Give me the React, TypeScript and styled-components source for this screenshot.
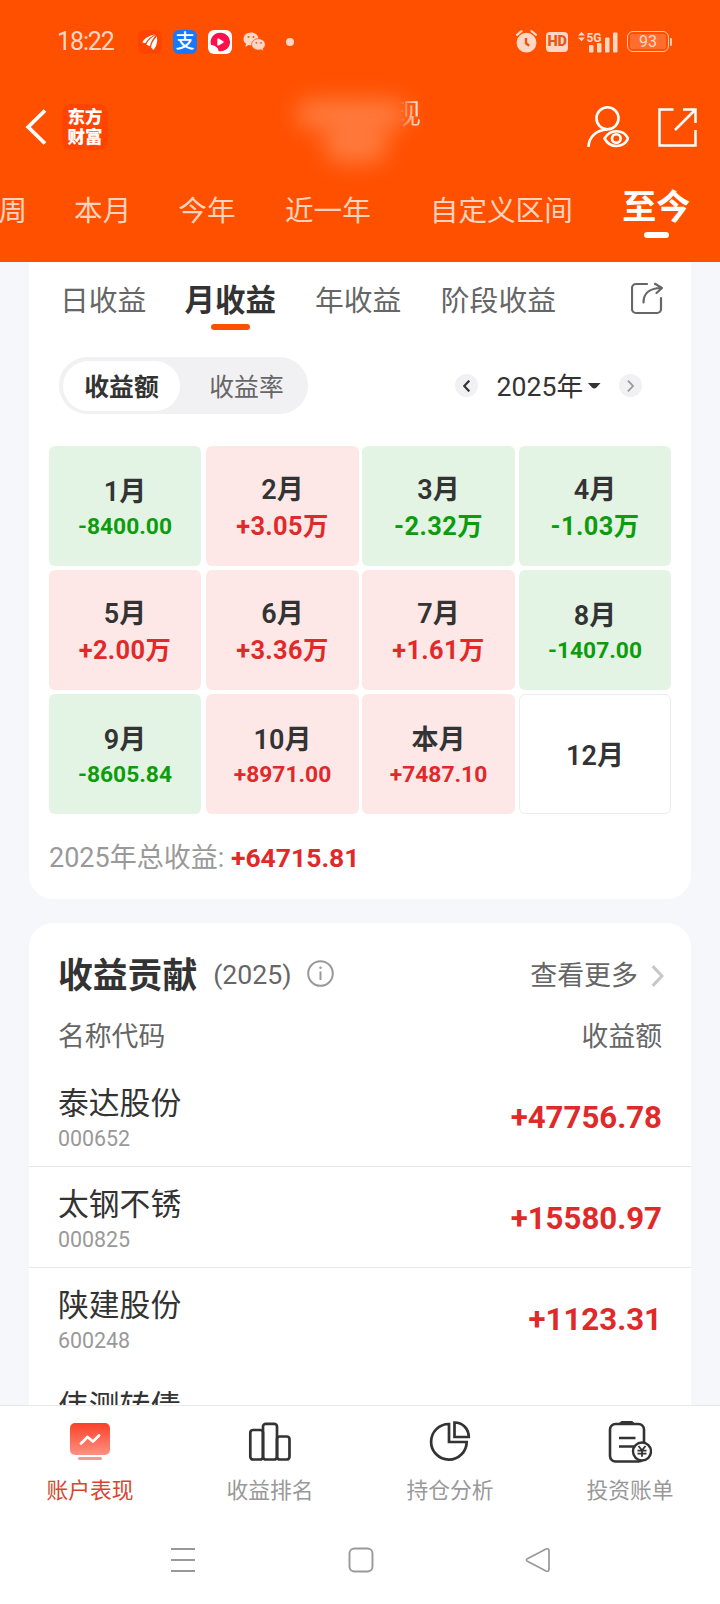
import React from 'react';
import styled, { createGlobalStyle } from 'styled-components';

const GlobalStyle = createGlobalStyle`
  * { box-sizing: border-box; }
  body {
    margin: 0;
    background: #fff;
    font-family: Roboto, 'Noto Sans CJK SC', sans-serif;
    color: #333;
  }
  svg { display: block; flex: none; }
`;

const Screen = styled.div`
  width: 720px;
  height: 1604px;
  display: flex;
  flex-direction: column;
  overflow: hidden;
  background: #f6f7fa;
`;

/* ---------- header ---------- */

const Header = styled.header`
  height: 262px;
  flex: none;
  background: #ff5000;
  color: #fff;
  overflow: hidden;
`;

const StatusBar = styled.div`
  height: 82px;
  padding: 1px 48px 0 57px;
  display: flex;
  justify-content: space-between;
  align-items: center;
`;

const StatusGroup = styled.div<{ $gap: number }>`
  display: flex;
  align-items: center;
  gap: ${(p) => p.$gap}px;
`;

const Clock = styled.span`
  width: 70px;
  font-size: 25px;
  line-height: 30px;
  letter-spacing: -1.1px;
  color: #ffd7c4;
  white-space: nowrap;
`;

const AppBadge = styled.span<{ $bg: string }>`
  width: 24px;
  height: 24px;
  border-radius: 6px;
  background: ${(p) => p.$bg};
  display: flex;
  align-items: center;
  justify-content: center;
  font-size: 19px;
  line-height: 24px;
  font-weight: 500;
`;

const DotSlot = styled.span`
  margin-left: 9px;
`;

const HdBadge = styled.span`
  width: 22px;
  height: 20px;
  border-radius: 4px;
  background: #ffd7c4;
  color: #e8561a;
  font-size: 14.5px;
  line-height: 20px;
  font-weight: 900;
  letter-spacing: -0.4px;
  text-align: center;
`;

const BatteryShell = styled.span`
  width: 42px;
  height: 21px;
  border: 1.8px solid #ffc8ac;
  border-radius: 6px;
  padding: 2px;
  display: flex;
`;

const BatteryFill = styled.span`
  flex: 1;
  border-radius: 2px;
  background: #ff6e2e;
  color: #ffd7c4;
  font-size: 16px;
  line-height: 16px;
  text-align: center;
`;

const Battery = styled.span`
  display: flex;
  align-items: center;
  &::after {
    content: '';
    width: 2px;
    height: 8px;
    margin-left: 1px;
    border-radius: 1px;
    background: #ffc8ac;
  }
`;

const TitleBar = styled.div`
  height: 90px;
  padding: 0 23px 0 25px;
  display: flex;
  align-items: center;
`;

const BrandBadge = styled.div`
  width: 46px;
  height: 46px;
  margin-left: 15px;
  border-radius: 9px;
  background: #ff4400;
  display: flex;
  align-items: center;
  justify-content: center;
  font-size: 17.5px;
  line-height: 20px;
  font-weight: 900;
  text-align: center;
`;

const TitleArea = styled.div`
  position: relative;
  width: 150px;
  height: 80px;
  margin-left: 180px;
`;

const Smudge = styled.span<{ $x: number; $y: number; $w: number; $h: number }>`
  position: absolute;
  left: ${(p) => p.$x}px;
  top: ${(p) => p.$y}px;
  width: ${(p) => p.$w}px;
  height: ${(p) => p.$h}px;
  border-radius: 18px;
  background: rgba(255, 150, 100, 0.6);
  filter: blur(11px);
`;

const TitleTail = styled.span`
  position: absolute;
  left: 105px;
  top: 11px;
  font-size: 28px;
  line-height: 34px;
  color: #ffd9c8;
  mask-image: linear-gradient(90deg, transparent 25%, #000 80%);
`;

const HeaderActions = styled.div`
  display: flex;
  align-items: center;
  gap: 29px;
  margin-left: auto;
`;

const RangeTabs = styled.nav`
  display: flex;
  height: 90px;
  margin-left: -1.5px;
  white-space: nowrap;
`;

const RangeTab = styled.span<{ $lead: number }>`
  margin-left: ${(p) => p.$lead}px;
  padding-top: 19px;
  font-size: 28.6px;
  line-height: 40px;
  color: #ffd3bd;
`;

const RangeTabActive = styled(RangeTab)`
  display: flex;
  flex-direction: column;
  align-items: center;
  padding-top: 14px;
  font-size: 34px;
  line-height: 42px;
  font-weight: 700;
  color: #fff;
  &::after {
    content: '';
    width: 25px;
    height: 6px;
    margin-top: 4px;
    border-radius: 3px;
    background: #fff;
  }
`;

/* ---------- content ---------- */

const Content = styled.main`
  height: 1143px;
  flex: none;
  padding: 0 29px;
  overflow: hidden;
`;

const CalendarCard = styled.section`
  height: 637px;
  padding: 0 20px;
  background: #fff;
  border-radius: 0 0 24px 24px;
`;

const PeriodTabs = styled.nav`
  height: 80px;
  padding: 0 8px 0 11px;
  display: flex;
  white-space: nowrap;
`;

const PeriodTab = styled.span<{ $lead?: number }>`
  margin-left: ${(p) => p.$lead ?? 0}px;
  padding-top: 19px;
  font-size: 28.8px;
  line-height: 40px;
  color: #666;
`;

const PeriodTabActive = styled(PeriodTab)`
  display: flex;
  flex-direction: column;
  align-items: center;
  font-size: 30.5px;
  font-weight: 700;
  color: #333;
  &::after {
    content: '';
    width: 39px;
    height: 6px;
    margin-top: 3px;
    border-radius: 3px;
    background: #ff5000;
  }
`;

const ShareButton = styled.span`
  margin: 20px 0 0 auto;
`;

const Controls = styled.div`
  height: 57px;
  margin: 15px 29px 0 10px;
  display: flex;
  align-items: center;
  justify-content: space-between;
`;

const Segmented = styled.div`
  width: 249px;
  height: 57px;
  padding: 4px;
  display: flex;
  border-radius: 29px;
  background: #f1f1f4;
`;

const Segment = styled.span<{ $active?: boolean }>`
  width: ${(p) => (p.$active ? 117 : 124)}px;
  padding-left: ${(p) => (p.$active ? 0 : 9)}px;
  height: 50px;
  border-radius: 25px;
  font-size: 24.8px;
  line-height: 53px;
  text-align: center;
  ${(p) =>
    p.$active
      ? 'background: #fff; color: #333; font-weight: 700;'
      : 'color: #666;'}
`;

const YearPicker = styled.div`
  display: flex;
  align-items: center;
`;

const RoundButton = styled.span`
  width: 23px;
  height: 23px;
  border-radius: 50%;
  background: #f1f1f3;
  display: flex;
  align-items: center;
  justify-content: center;
`;

const YearText = styled.span`
  margin: 2px 5px 0 19px;
  font-size: 26.6px;
  line-height: 36px;
`;

const CaretWrap = styled.span`
  margin-right: 18px;
`;

const MonthGrid = styled.div`
  margin-top: 32px;
  display: grid;
  grid-template-columns: 157px 156px 157px 152px;
  grid-auto-rows: 120px;
  row-gap: 4px;
`;

type Tone = 'up' | 'down' | 'none';

const toneBg: Record<Tone, string> = { up: '#fde8e7', down: '#e3f4e4', none: '#fff' };
const toneFg: Record<Tone, string> = { up: '#e02a2a', down: '#0d9c0d', none: '#333' };

const MonthCell = styled.div<{ $tone: Tone }>`
  padding-top: 4px;
  display: flex;
  flex-direction: column;
  align-items: center;
  justify-content: center;
  width: 152px;
  border-radius: 6px;
  border: ${(p) => (p.$tone === 'none' ? '1px solid #ececec' : 'none')};
  background: ${(p) => toneBg[p.$tone]};
  &:nth-child(4n + 2),
  &:nth-child(4n + 3) {
    width: 153px;
  }
`;

const MonthName = styled.span`
  font-size: 27px;
  line-height: 37px;
  font-weight: 600;
  color: #333;
`;

const MonthValue = styled.span<{ $tone: Tone; $small: boolean }>`
  font-size: ${(p) => (p.$small ? 22.8 : 25.4)}px;
  line-height: ${(p) => (p.$small ? 31 : 35)}px;
  font-weight: 700;
  letter-spacing: ${(p) => (p.$small ? 0 : 0.4)}px;
  color: ${(p) => toneFg[p.$tone]};
`;

const YearTotal = styled.div`
  margin-top: 25px;
  font-size: 27px;
  line-height: 38px;
  color: #999;
  white-space: nowrap;
  b { color: #e02a2a; font-weight: 700; font-size: 26.5px; }
`;

const ContributionCard = styled.section`
  margin-top: 24px;
  height: 640px;
  padding-top: 29px;
  background: #fff;
  border-radius: 24px 24px 0 0;
`;

const CardHead = styled.div`
  height: 48px;
  padding: 0 27px 0 29px;
  display: flex;
  align-items: center;
  white-space: nowrap;
`;

const CardTitle = styled.h2`
  margin: 0;
  font-size: 34.8px;
  line-height: 48px;
  font-weight: 700;
`;

const CardYear = styled.span`
  margin: 0 15px 2px 16px;
  font-size: 26.7px;
  line-height: 44px;
  color: #666;
`;

const InfoSlot = styled.span`
  margin-bottom: 6px;
`;

const MoreLink = styled.span`
  margin: 0 0 1px auto;
  display: flex;
  align-items: center;
  gap: 13px;
  font-size: 26.9px;
  line-height: 44px;
  color: #666;
`;

const ColumnHead = styled.div`
  height: 54px;
  padding: 10px 29px 0 29px;
  display: flex;
  justify-content: space-between;
  font-size: 26.8px;
  line-height: 54px;
  color: #666;
`;

const RowList = styled.div`
  margin-top: 12px;
`;

const StockRow = styled.div<{ $divider: boolean }>`
  height: 101px;
  padding: 4px 29px 0 29px;
  display: flex;
  align-items: center;
  justify-content: space-between;
  border-bottom: 1px solid ${(p) => (p.$divider ? '#e8e8e8' : 'transparent')};
`;

const StockId = styled.div`
  display: flex;
  flex-direction: column;
`;

const StockName = styled.span`
  margin-top: -1px;
  font-size: 30.8px;
  line-height: 43px;
`;

const StockCode = styled.span`
  font-size: 21.4px;
  line-height: 28px;
  color: #999;
`;

const StockValue = styled.span`
  font-size: 31.2px;
  line-height: 40px;
  font-weight: 700;
  color: #e02a2a;
`;

/* ---------- bottom bars ---------- */

const BottomNav = styled.nav`
  height: 115px;
  flex: none;
  display: grid;
  grid-template-columns: repeat(4, 1fr);
  background: #fff;
  border-top: 1px solid #e9e9e9;
`;

const NavItem = styled.div<{ $active?: boolean }>`
  display: flex;
  flex-direction: column;
  align-items: center;
  padding-top: 14px;
  font-size: 21.8px;
  line-height: 32px;
  color: ${(p) => (p.$active ? '#d9452f' : '#999')};
  svg { margin-bottom: 11px; }
`;

const SystemNav = styled.div`
  height: 84px;
  flex: none;
  padding: 0 169px 4px 170px;
  display: flex;
  align-items: center;
  justify-content: space-between;
  background: #fff;
`;

/* ---------- icons ---------- */

const TONE = '#ffd7c4';

const PlumeIcon = () => (
  <svg width="18" height="18" viewBox="0 0 18 18" fill="#fff">
    <path d="M1.500 9.800C2.500 6 7 3 14 1.300 11 3.500 7.500 5 4.500 10Z" />
    <path d="M5.300 11.500C7 7.500 10.500 4 15 2 12.500 5 10 8 8.800 13.300Z" />
    <path d="M10 14.500C10.500 10.500 12.500 7 15.800 3.500 16.800 8 16 12.500 12.500 17Z" />
  </svg>
);

const VideoIcon = () => (
  <svg width="20" height="20" viewBox="0 0 20 20">
    <path d="M10.500 .8a9.200 9.200 0 1 1-2 18.100Q8.500 14.500 1 12.800A9.300 9.300 0 0 1 10.500 .8Z" fill="#ff0f4b" />
    <path d="M8.200 7.300v5.400l4.600-2.700Z" fill="#fff" stroke="#fff" strokeWidth="1.800" strokeLinejoin="round" />
  </svg>
);

const ChatIcon = () => (
  <svg width="23" height="20" viewBox="0 0 23 20">
    <path d="M8 .5c4.200 0 7.500 2.800 7.500 6.400S12.200 13.300 8 13.300c-.9 0-1.800-.1-2.600-.4L2.500 15l.5-3.300C1.400 10.500.5 8.800.5 6.900.5 3.300 3.800.5 8 .5Z" fill={TONE} />
    <path d="M15.500 6.700c3.800 0 6.800 2.500 6.800 5.700 0 1.800-.9 3.300-2.300 4.400l.3 2.500-2.300-1.500c-.8.2-1.600.3-2.500.3-3.800 0-6.800-2.500-6.800-5.700s3-5.700 6.800-5.700Z" fill={TONE} stroke="#ff5000" strokeWidth=".8" />
    <g fill="#e8561a">
      <circle cx="5.500" cy="5" r="1" /><circle cx="10.500" cy="5" r="1" />
      <circle cx="13.400" cy="10.800" r=".9" /><circle cx="18" cy="10.800" r=".9" />
    </g>
  </svg>
);

const DotIcon = () => (
  <svg width="8" height="8" viewBox="0 0 8 8"><circle cx="4" cy="4" r="4" fill={TONE} /></svg>
);

const AlarmIcon = () => (
  <svg width="21" height="23" viewBox="0 0 21 23" fill="none">
    <circle cx="10.500" cy="12.700" r="9.900" fill={TONE} />
    <path d="M1 4.800 5.500 1.200M20 4.800 15.500 1.200" stroke={TONE} strokeWidth="2.200" strokeLinecap="round" />
    <path d="M10 8v5.300l3.200 2.500" stroke="#e8561a" strokeWidth="2.400" />
  </svg>
);

const SignalIcon = () => (
  <svg width="40" height="22" viewBox="0 0 40 22" fill={TONE}>
    <path d="M0 4.500 3.500.8 7 4.500ZM0 6.500 3.500 10.200 7 6.500Z" />
    <text x="8.500" y="10.800" fontSize="13.500" fontWeight="700" fontFamily="Roboto, sans-serif" textLength="15" lengthAdjust="spacingAndGlyphs">5G</text>
    <rect x="11" y="14" width="4.500" height="7.500" rx="1" />
    <rect x="19" y="12" width="4.500" height="9.500" rx="1" />
    <rect x="27" y="6.500" width="4.500" height="15" rx="1" />
    <rect x="35" y="1.500" width="4.500" height="20" rx="1" />
  </svg>
);

const BackIcon = () => (
  <svg width="22" height="36" viewBox="0 0 22 36" fill="none" stroke="#fff" strokeWidth="3.800">
    <path d="M20 1.500 3.200 18 20 34.500" />
  </svg>
);

const WatcherIcon = () => (
  <svg width="42" height="42" viewBox="0 0 42 42" fill="none" stroke="#fff" strokeWidth="2.600">
    <circle cx="20.500" cy="12.300" r="11" />
    <path d="M1.500 41C1.800 31 9 24 20.500 23.500" />
    <path d="M17.500 32.500C20 28 24.500 25.300 29.500 25.300S39 28 41 32.500C39 37 34.500 40 29.500 40S20 37 17.500 32.500Z" />
    <circle cx="29.300" cy="32.500" r="4.300" />
  </svg>
);

const ExpandIcon = () => (
  <svg width="39" height="39" viewBox="0 0 39 39" fill="none" stroke="#fff" strokeWidth="2.500">
    <path d="M15.500 1.500H1.500v36H37.500V22" />
    <path d="M25 1.500h12.500V15M37.500 1.500 17 22" />
  </svg>
);

const ShareIcon = () => (
  <svg width="32" height="33" viewBox="0 0 32 33" fill="none" stroke="#666" strokeWidth="2.200" strokeLinecap="round" strokeLinejoin="round">
    <path d="M16 2H5a4 4 0 0 0-4 4V27a4 4 0 0 0 4 4H26a4 4 0 0 0 4-4V16" />
    <path d="M12.500 20.500C12.500 12 18 6.200 30 6M24 1.800 31 6l-5.500 5" />
  </svg>
);

const ChevronIcon = ({ flip, color, size, weight }: { flip?: boolean; color: string; size: number; weight: number }) => (
  <svg width={size * 0.6} height={size} viewBox="0 0 12 20" fill="none" stroke={color} strokeWidth={weight}>
    <path d={flip ? 'M10.500 1 2 10l8.500 9' : 'M1.500 1 10 10l-8.500 9'} />
  </svg>
);

const CaretIcon = () => (
  <svg width="13" height="6" viewBox="0 0 13 6" fill="#333">
    <path d="M0 0H12.500L8.500 4.500Q6.200 6.500 4 4.500Z" />
  </svg>
);

const InfoIcon = () => (
  <svg width="27" height="27" viewBox="0 0 27 27" fill="none" stroke="#999" strokeWidth="2">
    <circle cx="13.500" cy="13.500" r="12.300" />
    <path d="M13.500 11.500V20" />
    <circle cx="13.500" cy="7.800" r="1.200" fill="#999" stroke="none" />
  </svg>
);

const AccountIcon = () => (
  <svg width="44" height="44" viewBox="0 0 44 44">
    <defs>
      <linearGradient id="accountFill" x1="0" y1="0" x2="0" y2="1">
        <stop offset="0" stopColor="#fb4128" />
        <stop offset="1" stopColor="#ff9182" />
      </linearGradient>
    </defs>
    <rect x="2" y="3" width="40" height="32" rx="5" fill="url(#accountFill)" />
    <path d="M13 23.500 19.500 17 25 21.500 31 15.500" fill="none" stroke="#fff" strokeWidth="2.800" strokeLinecap="round" strokeLinejoin="round" />
    <rect x="10" y="37" width="24" height="3" rx="1.500" fill="#ee9b90" />
  </svg>
);

const RankIcon = () => (
  <svg width="44" height="44" viewBox="0 0 44 44" fill="none" stroke="#333" strokeWidth="2.700">
    <rect x="2.300" y="10" width="12.700" height="29.500" rx="2.800" />
    <rect x="15" y="3.800" width="14" height="35.700" rx="2.800" />
    <rect x="29" y="16.500" width="12.500" height="23" rx="2.800" />
  </svg>
);

const PieIcon = () => (
  <svg width="44" height="44" viewBox="0 0 44 44" fill="none" stroke="#333" strokeWidth="2.700">
    <path d="M21 4A17.800 17.800 0 1 0 38.700 22H21Z" />
    <path d="M26.500 2.500V17H40.800C40.500 8.500 34.500 2.500 26.500 2.500Z" />
  </svg>
);

const BillIcon = () => (
  <svg width="44" height="44" viewBox="0 0 44 44" fill="none" stroke="#333" strokeWidth="2.600">
    <path d="M13.500 1.500H24L27 4H10.500Z" fill="#333" strokeWidth="1" />
    <rect x="2" y="4" width="34" height="37.500" rx="5.500" />
    <path d="M11 18H27.500M11 26.500H27" />
    <circle cx="34" cy="31.500" r="9" fill="#fff" strokeWidth="2.400" />
    <path d="M30.500 26 34 30.300 37.500 26M29.500 30.700h9M29.500 33.700h9M34 30.300V36.800" strokeWidth="1.800" />
  </svg>
);

const MenuIcon = () => (
  <svg width="26" height="26" viewBox="0 0 26 26" stroke="#999" strokeWidth="2">
    <path d="M1 2h24M1 13h24M1 24h24" />
  </svg>
);

const HomeIcon = () => (
  <svg width="26" height="26" viewBox="0 0 26 26" fill="none" stroke="#999" strokeWidth="1.900">
    <rect x="1.500" y="1.500" width="23" height="23" rx="5" />
  </svg>
);

const ReturnIcon = () => (
  <svg width="26" height="26" viewBox="0 0 26 26" fill="none" stroke="#999" strokeWidth="1.700" strokeLinejoin="round">
    <path d="M2.400 11.700 21 2Q24 1 24 4V22Q24 25 21 24L2.400 14.300Q.5 13 2.400 11.700Z" />
  </svg>
);

/* ---------- data ---------- */

const months: { name: string; value?: string; tone: Tone }[] = [
  { name: '1月', value: '-8400.00', tone: 'down' },
  { name: '2月', value: '+3.05万', tone: 'up' },
  { name: '3月', value: '-2.32万', tone: 'down' },
  { name: '4月', value: '-1.03万', tone: 'down' },
  { name: '5月', value: '+2.00万', tone: 'up' },
  { name: '6月', value: '+3.36万', tone: 'up' },
  { name: '7月', value: '+1.61万', tone: 'up' },
  { name: '8月', value: '-1407.00', tone: 'down' },
  { name: '9月', value: '-8605.84', tone: 'down' },
  { name: '10月', value: '+8971.00', tone: 'up' },
  { name: '本月', value: '+7487.10', tone: 'up' },
  { name: '12月', tone: 'none' },
];

const stocks = [
  { name: '泰达股份', code: '000652', value: '+47756.78', divider: true },
  { name: '太钢不锈', code: '000825', value: '+15580.97', divider: true },
  { name: '陕建股份', code: '600248', value: '+1123.31', divider: false },
  { name: '伟测转债', code: '', value: '', divider: false },
];

export default function App() {
  return (
    <Screen>
      <GlobalStyle />
      <Header>
        <StatusBar>
          <StatusGroup $gap={11}>
            <Clock>18:22</Clock>
            <AppBadge $bg="#ff4400"><PlumeIcon /></AppBadge>
            <AppBadge $bg="#1677ff">支</AppBadge>
            <AppBadge $bg="#fff"><VideoIcon /></AppBadge>
            <ChatIcon />
            <DotSlot><DotIcon /></DotSlot>
          </StatusGroup>
          <StatusGroup $gap={9.5}>
            <AlarmIcon />
            <HdBadge>HD</HdBadge>
            <SignalIcon />
            <Battery><BatteryShell><BatteryFill>93</BatteryFill></BatteryShell></Battery>
          </StatusGroup>
        </StatusBar>
        <TitleBar>
          <BackIcon />
          <BrandBadge>东方<br />财富</BrandBadge>
          <TitleArea>
            <Smudge $x={8} $y={12} $w={112} $h={31} />
            <Smudge $x={36} $y={38} $w={64} $h={38} />
            <TitleTail>现</TitleTail>
          </TitleArea>
          <HeaderActions>
            <WatcherIcon />
            <ExpandIcon />
          </HeaderActions>
        </TitleBar>
        <RangeTabs>
          <RangeTab $lead={0}>周</RangeTab>
          <RangeTab $lead={47}>本月</RangeTab>
          <RangeTab $lead={47}>今年</RangeTab>
          <RangeTab $lead={49.5}>近一年</RangeTab>
          <RangeTab $lead={59}>自定义区间</RangeTab>
          <RangeTabActive $lead={49.5}>至今</RangeTabActive>
        </RangeTabs>
      </Header>

      <Content>
        <CalendarCard>
          <PeriodTabs>
            <PeriodTab>日收益</PeriodTab>
            <PeriodTabActive $lead={38}>月收益</PeriodTabActive>
            <PeriodTab $lead={39}>年收益</PeriodTab>
            <PeriodTab $lead={39.5}>阶段收益</PeriodTab>
            <ShareButton><ShareIcon /></ShareButton>
          </PeriodTabs>
          <Controls>
            <Segmented>
              <Segment $active>收益额</Segment>
              <Segment>收益率</Segment>
            </Segmented>
            <YearPicker>
              <RoundButton><ChevronIcon flip color="#333" size={12} weight={3.6} /></RoundButton>
              <YearText>2025年</YearText>
              <CaretWrap><CaretIcon /></CaretWrap>
              <RoundButton><ChevronIcon color="#999" size={12} weight={3} /></RoundButton>
            </YearPicker>
          </Controls>
          <MonthGrid>
            {months.map((m) => (
              <MonthCell key={m.name} $tone={m.tone}>
                <MonthName>{m.name}</MonthName>
                {m.value && (
                  <MonthValue $tone={m.tone} $small={!m.value.endsWith('万')}>{m.value}</MonthValue>
                )}
              </MonthCell>
            ))}
          </MonthGrid>
          <YearTotal>2025年总收益: <b>+64715.81</b></YearTotal>
        </CalendarCard>

        <ContributionCard>
          <CardHead>
            <CardTitle>收益贡献</CardTitle>
            <CardYear>(2025)</CardYear>
            <InfoSlot><InfoIcon /></InfoSlot>
            <MoreLink>查看更多<ChevronIcon color="#c8c8c8" size={22} weight={2.8} /></MoreLink>
          </CardHead>
          <ColumnHead><span>名称代码</span><span>收益额</span></ColumnHead>
          <RowList>
            {stocks.map((s) => (
              <StockRow key={s.name} $divider={s.divider}>
                <StockId>
                  <StockName>{s.name}</StockName>
                  <StockCode>{s.code || '\u00a0'}</StockCode>
                </StockId>
                <StockValue>{s.value}</StockValue>
              </StockRow>
            ))}
          </RowList>
        </ContributionCard>
      </Content>

      <BottomNav>
        <NavItem $active><AccountIcon />账户表现</NavItem>
        <NavItem><RankIcon />收益排名</NavItem>
        <NavItem><PieIcon />持仓分析</NavItem>
        <NavItem><BillIcon />投资账单</NavItem>
      </BottomNav>
      <SystemNav>
        <MenuIcon />
        <HomeIcon />
        <ReturnIcon />
      </SystemNav>
    </Screen>
  );
}
